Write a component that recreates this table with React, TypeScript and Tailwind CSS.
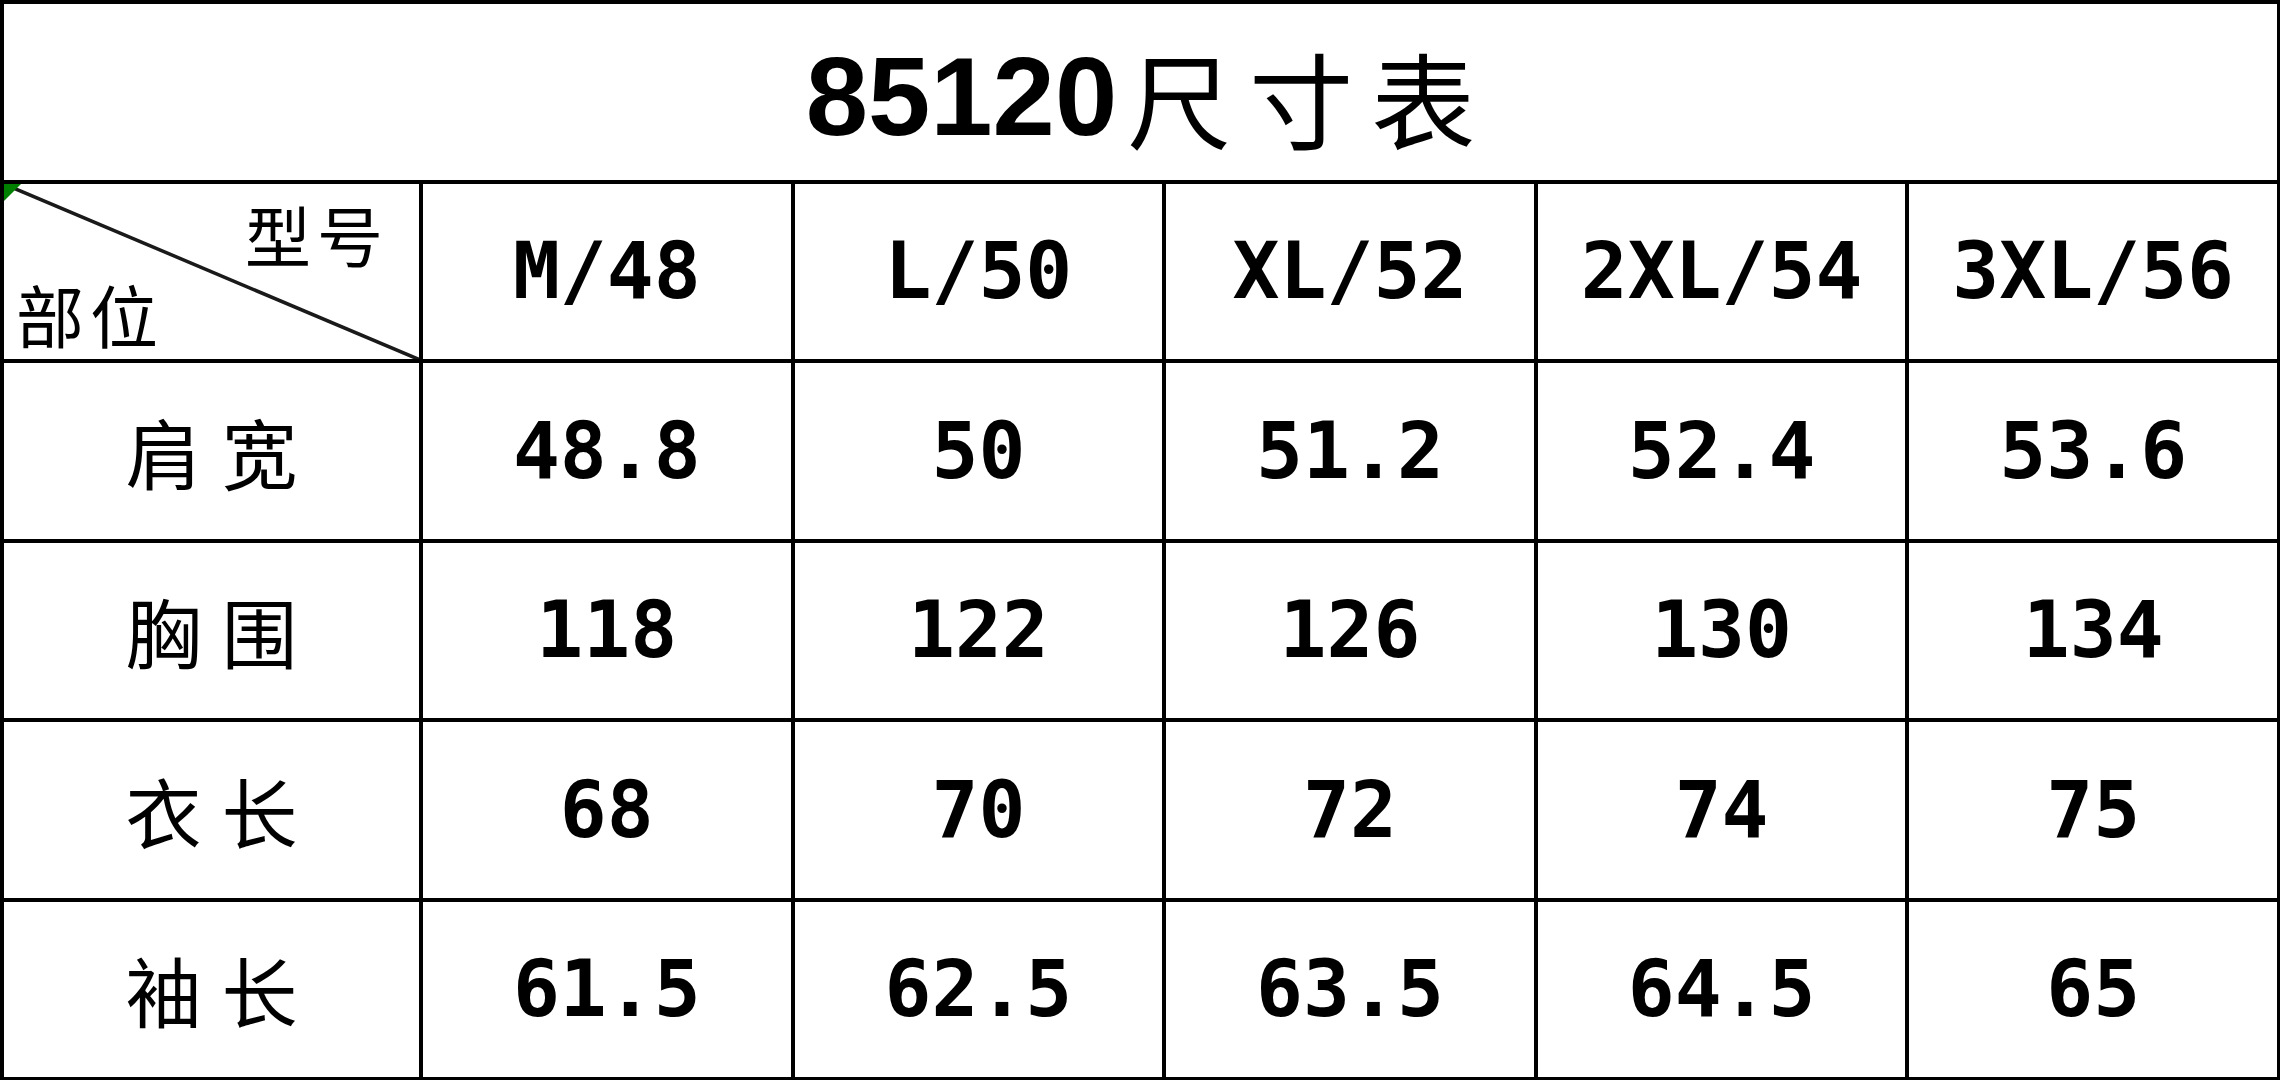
import React from 'react';

const sizes = ['M/48', 'L/50', 'XL/52', '2XL/54', '3XL/56'];

const rows: { label: [string, string]; values: string[] }[] = [
  { label: ['肩', '宽'], values: ['48.8', '50', '51.2', '52.4', '53.6'] },
  { label: ['胸', '围'], values: ['118', '122', '126', '130', '134'] },
  { label: ['衣', '长'], values: ['68', '70', '72', '74', '75'] },
  { label: ['袖', '长'], values: ['61.5', '62.5', '63.5', '64.5', '65'] },
];

const cjk = "font-['Noto_Sans_CJK_SC',sans-serif]";
const mono = "font-['DejaVu_Sans_Mono',monospace] font-bold text-[78px] leading-none text-black";

function Cell({ children }: { children: React.ReactNode }) {
  return <div className="bg-white flex items-center justify-center">{children}</div>;
}

export default function App() {
  return (
    <div className="w-[2280px] h-[1080px] bg-black pt-[4px] pl-[4px] pr-[3px] pb-[3px] grid grid-cols-[415px_repeat(5,minmax(0,1fr))] grid-rows-[repeat(6,minmax(0,1fr))] gap-[4px]">
      {/* Title */}
      <div className="col-span-6 bg-white flex items-center justify-center pt-[10px]">
        <div className="flex items-center text-black">
          <span className="font-['Liberation_Sans',sans-serif] font-bold text-[112px] leading-none">85120</span>
          <span className={`${cjk} text-[104px] leading-none flex gap-[18px] ml-[10px]`}>
            <span>尺</span>
            <span>寸</span>
            <span>表</span>
          </span>
        </div>
      </div>

      {/* Corner header with diagonal */}
      <div className="bg-white relative flex flex-col justify-between pt-[16px] pr-[36px] pb-[11px] pl-[12px]">
        <svg className="absolute inset-0 w-full h-full" viewBox="0 0 415 175" preserveAspectRatio="none">
          <line x1="0" y1="0" x2="415" y2="175" stroke="#1a1a1a" strokeWidth="3.5" />
          <polygon points="0,0 17,0 0,17" fill="#008000" />
        </svg>
        <div className={`${cjk} text-[66px] leading-none text-black flex justify-end gap-[6px] relative`}>
          <span>型</span>
          <span>号</span>
        </div>
        <div className={`${cjk} text-[68px] leading-none text-black flex justify-start gap-[6px] relative`}>
          <span>部</span>
          <span>位</span>
        </div>
      </div>

      {sizes.map((s) => (
        <Cell key={s}>
          <span className={mono}>{s}</span>
        </Cell>
      ))}

      {rows.map((r) => (
        <React.Fragment key={r.label.join('')}>
          <Cell>
            <span className={`${cjk} text-[76px] leading-none text-black flex gap-[20px]`}>
              <span>{r.label[0]}</span>
              <span>{r.label[1]}</span>
            </span>
          </Cell>
          {r.values.map((v, i) => (
            <Cell key={i}>
              <span className={mono}>{v}</span>
            </Cell>
          ))}
        </React.Fragment>
      ))}
    </div>
  );
}
